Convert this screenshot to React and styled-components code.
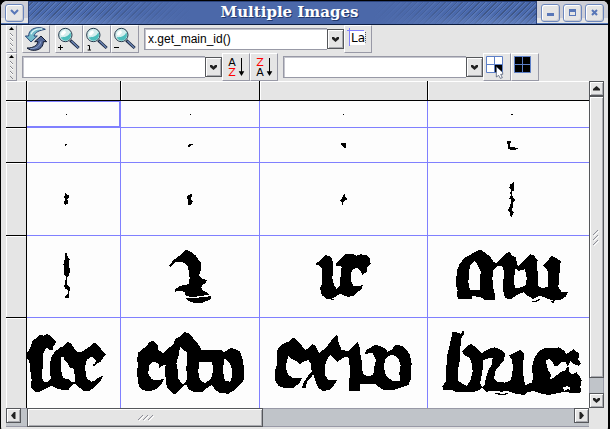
import React from "react";
import styled, { createGlobalStyle } from "styled-components";

const face = "#e5e5e5";
const shade = "#9899a6";
const blue = "#8080ff";
const dark = "#55575b";

const GlobalStyle = createGlobalStyle`
  *, *::before, *::after { box-sizing: border-box; }
  html { background: #000; }
  body { margin: 0; font-family: "Liberation Sans", Arial, sans-serif; font-size: 12px; }
  button, input { font: inherit; color: #000; padding: 0; margin: 0; border-radius: 0; }
  svg { display: block; flex: none; }
`;

const Window = styled.main`
  display: flex;
  flex-direction: column;
  min-height: 100vh;
  background: ${face};
  border: 1px solid #000;
  border-right-width: 2px;
  border-radius: 7px 7px 5px 5px;
  overflow: hidden;
`;

const TitleBar = styled.header`
  display: flex;
  height: 24px;
  border-bottom: 1px solid #0b1c40;
`;

const Controls = styled.div`
  display: flex;
  align-items: center;
  gap: 3px;
  padding: 0 4px;
  background: linear-gradient(#cdced6 0 17px, #e5e5e5 17px 22px, #5779b8 22px);
`;

const WindowButton = styled.button`
  display: grid;
  place-items: center;
  width: 19px;
  height: 18px;
  border: 1px solid #6c87bd;
  border-radius: 3px;
  background: ${face};
  box-shadow: inset 1px 1px #fff, inset -1px -1px #c9cad2;
`;

const Title = styled.h1`
  flex: 1;
  margin: 0;
  padding-left: 14px;
  border: solid #2b437c;
  border-width: 1px 1px 0 1px;
  text-align: center;
  font: bold 15px/21px "DejaVu Serif", serif;
  color: #fff;
  text-shadow: 1px 1px #22386c;
  background:
    linear-gradient(90deg, transparent 10%, #4b68a9 32%, #4b68a9 68%, transparent 90%),
    linear-gradient(transparent 12px, #6e8ac4aa),
    repeating-linear-gradient(135deg, #4969ad 0 2px, #3e5686 2px 3px, #5877b8 3px 4px);
`;

const Toolbar = styled.div`
  display: flex;
  align-items: center;
  height: 28px;
  padding-left: 5px;
`;

const Grip = styled.div`
  width: 11px;
  height: 28px;
  margin-right: 5px;
  border: 1px solid;
  border-color: #fff ${shade} ${shade} #fff;
`;

const Group = styled.div`
  display: flex;
  align-items: center;
  margin-right: 5px;
`;

const ToolButton = styled.button`
  width: 28px;
  height: 28px;
  border: 1px solid;
  border-color: #fff ${shade} ${shade} #fff;
  background: ${face};
  svg { margin: -1px; }
`;

const Combo = styled.div`
  display: flex;
  align-items: center;
  width: 200px;
`;

const ComboInput = styled.input`
  flex: 1;
  min-width: 0;
  height: 22px;
  padding-left: 3px;
  border: 1px solid ${shade};
  border-right: 0;
  box-shadow: inset 1px 1px #c5c6ce;
  background: #fff;
  outline: 0;
`;

const ArrowButton = styled.button`
  display: grid;
  place-items: center;
  flex: none;
  width: ${(p) => p.$w || 15}px;
  height: ${(p) => p.$h || 15}px;
  border: 1px solid ${dark};
  background: ${face};
  box-shadow: inset 1px 1px #fff, inset -1px -1px #aaabb0;
`;

const Body = styled.section`
  display: grid;
  grid-template-columns: minmax(0, 1fr) 15px;
  padding: 0 4px 4px 5px;
`;

const Sheet = styled.table`
  width: 100%;
  table-layout: fixed;
  border-collapse: separate;
  border-spacing: 0;
  background: #fdfdfd;
`;

const Column = styled.col`
  width: ${(p) => (p.$w ? `${p.$w}px` : "auto")};
`;

const Heading = styled.th`
  height: ${(p) => p.$h}px;
  padding: 0;
  background: ${face};
  border: 0 solid #000;
  border-right-width: ${(p) => (p.$open ? 0 : 1)}px;
  border-bottom-width: ${(p) => (p.$last ? 0 : 1)}px;
  box-shadow: inset 1px 1px #fff;
`;

const Cell = styled.td`
  padding: 0;
  overflow: hidden;
  border: 0 solid ${blue};
  border-right-width: ${(p) => (p.$open ? 0 : 1)}px;
  border-bottom-width: ${(p) => (p.$last ? 0 : 1)}px;
  box-shadow: ${(p) => (p.$selected ? `inset 0 1px ${blue}, inset -1px -1px ${blue}` : "none")};
`;

const ScrollBar = styled.div`
  display: flex;
  flex-direction: ${(p) => (p.$vertical ? "column" : "row")};
  background: #c0c4c9;
  border: 0 solid ${shade};
  border-width: ${(p) => (p.$vertical ? "0 1px" : "1px 0")};
  ${(p) => (p.$vertical ? "> * { margin-inline: -1px; }" : "> * { margin-block: -1px; }")}
`;

const Thumb = styled.div`
  display: grid;
  place-items: center;
  flex: ${(p) => p.$share} 1 0;
  border: 1px solid ${dark};
  background: ${face};
  box-shadow: inset 1px 1px #fff, inset -1px -1px #aaabb0;
`;

const Track = styled.div`
  flex: ${(p) => p.$share} 1 0;
`;

const turns = { down: 0, left: 90, up: 180, right: 270 };

const ScrollArrow = ({ to }) => (
  <svg width="9" height="9" viewBox="0 0 9 9" aria-hidden="true">
    {to === "down" ? (
      <path d="M1 2h2l1.5 1.5L6 2h2v2L4.5 7 1 4z" fill="#222" />
    ) : (
      <path transform={`rotate(${turns[to]} 4.5 4.5)`} d="M1 2.500h7v1.500L4.500 7 1 4z" fill="#222" />
    )}
  </svg>
);

const ThumbMarks = () => (
  <svg width="17" height="17" viewBox="0 0 17 17" aria-hidden="true">
    <path d="M1 11l5-5M6 11l5-5M11 11l5-5" stroke="#8d8e98" />
    <path d="M2 12l5-5M7 12l5-5M12 12l5-5" stroke="#fff" />
  </svg>
);

const ThumbMarksVertical = () => (
  <svg width="9" height="17" viewBox="0 0 9 17" aria-hidden="true">
    <path d="M1 6l5-5M1 11l5-5M1 16l5-5" stroke="#8d8e98" />
    <path d="M2 7l5-5M2 12l5-5M2 17l5-5" stroke="#fff" />
  </svg>
);

const GripMarks = () => (
  <svg width="9" height="26" viewBox="0 0 9 26" aria-hidden="true">
    <path d="M2 4l2.500-3L7 4z" fill="#000" />
    <path d="M3 7l3 3M3 12l3 3M3 17l3 3M3 22l3 3" stroke="#85868c" />
    <path d="M3 8l3 3M3 13l3 3M3 18l3 3" stroke="#fff" />
  </svg>
);

const Icon = ({ children }) => (
  <svg width="28" height="28" viewBox="0 0 84 84" aria-hidden="true">{children}</svg>
);

const RefreshIcon = () => (
  <Icon>
    <path d="M70 13C58 6 37 6 27 16c-5 5-7 10-7 17H10l17 18 19-18H36c3-11 15-17 34-20z" fill="#75bccb" stroke="#254577" strokeWidth="3" />
    <path d="M61 12C43 10 32 16 27 28" fill="none" stroke="#e2f7f8" strokeWidth="4" />
    <path d="M15 69c12 10 32 9 42-1 5-5 7-11 7-18h10L57 33 38 50h10c-3 12-14 19-33 19z" fill="#526596" stroke="#10192e" strokeWidth="3" />
    <path d="M25 71c18 0 28-7 32-22" fill="none" stroke="#8ba4cd" strokeWidth="3" />
  </Icon>
);

const ZoomIcon = ({ sign }) => (
  <Icon>
    <path d="M46 46l25 23" stroke="#17243d" strokeWidth="9" />
    <path d="M49 48l21 20" stroke="#6f88b7" strokeWidth="4" />
    <circle cx="31" cy="30" r="20" fill="#d5eeee" stroke="#23394c" strokeWidth="3" />
    <path d="M17 36c9 2 25-1 29-15 6 15-3 26-15 26-7 0-12-5-14-11z" fill="#4dbebd" />
    <path d="M18 29c0-7 5-12 12-13l3 7-9 9z" fill="#fff" />
    {sign === "+" && <path d="M9 67.500h15M16.500 60v15" stroke="#000" strokeWidth="3" />}
    {sign === "-" && <path d="M9 67.500h15" stroke="#000" strokeWidth="3" />}
    {sign === "1" && <path d="M14 61.500h5.500v13M14 75h10" fill="none" stroke="#000" strokeWidth="3" />}
  </Icon>
);

const IconText = styled.text`
  font: ${(p) => p.$size}px "DejaVu Sans", sans-serif;
`;

const LabelIcon = () => (
  <Icon>
    <path d="M18 18h45v42H18z" fill="#fff" />
    <path d="M9 16.500h51M16.500 9v54" stroke={blue} strokeWidth="3" />
    <path d="M64.500 21v32" stroke="#555" strokeWidth="3" strokeDasharray="3 3" />
    <IconText x="21" y="51" $size={36}>La</IconText>
  </Icon>
);

const SortIcon = ({ first, last }) => (
  <Icon>
    <IconText x="19" y="40" $size={33} fill={first === "Z" ? "#f00" : "#000"}>{first}</IconText>
    <IconText x="19" y="69" $size={33} fill={last === "Z" ? "#f00" : "#000"}>{last}</IconText>
    <path d="M58.500 15v50" stroke="#000" strokeWidth="3" />
    <path d="M50 55h17l-8.500 14z" />
  </Icon>
);

const SelectIcon = ({ all }) => (
  <Icon>
    <path d="M10.500 10.500h48v48h-48z" fill={all ? "#000" : "#fff"} />
    {!all && <path d="M34 34h24v24H34z" />}
    <path d="M10.500 10.500h48v48h-48zM34.500 10v48M10 34.500h48" fill="none" stroke="#5d7fc7" strokeWidth="3" />
    {!all && <path d="M40 41l19 17v6h-6l5 10-6 2-5-9-7 5z" fill="#fff" stroke="#34415f" strokeWidth="2" />}
  </Icon>
);

const columnWidths = [93, 138, 167, 161];
const rowHeights = [26, 34, 72, 81, 90];

// Each glyph: origin of its cell in drawing units (three per pixel) and its outline.
const glyphs = [
  [
    { x: 81, y: 303, d: "M198 342h3v3h-3z" },
    { x: 363, y: 303, d: "M570 342h3v3h-3z" },
    { x: 780, y: 303, d: "M1029 342h3v3h-3z" },
    { x: 1284, y: 303, d: "M1533 342h6v3h-6z" },
  ],
  [
    { x: 81, y: -6, d: "M195 42h6v3h-3v3h-3z" },
    { x: -27, y: 24, d: "M177 72h12v3h-6v3h-3v3h-6v-6h3z" },
    { x: 390, y: 24, d: "M633 69h12l3 3v12h-6l-3-6-6-3z" },
    { x: 84, y: 24, d: "M321 63h12v3l-3 3v6l-1 3 3 4h12l3 2h7v3h-6v3h-17l-6-4v-11l-6-5z" },
  ],
  [
    { x: 81, y: 99, d: "M195 189l5 4 7 3-2 10-4 2 3 6-1 9-8 1-3-6 3-10-3-8 3-3z" },
    { x: -27, y: 129, d: "M180 222h6v6l-3 4v6l6 6-3 6-3 5h-9v-17l-3-2v-8l6-3z" },
    { x: 390, y: 129, d: "M642 222h4l-2 8 4 4 4 4-7 3-6 5v9h-3v-9l-6-3 4-6 4-7z" },
    { x: 84, y: 129, d: "M340 186l2 4-1 22-6 1v9l5 12 8 6-8 8-2 14-2 10 5 6-3 4-1 8h-5l-2-12-6-6 4-10 5-14 1-8-6-4 4-8-1-10 3-6-6-9 3-11 4-1z" },
  ],
  [
    { x: 81, y: 3, d: "M195 54h5l3 11 6 7-3 18 4 15-3 17-6 6v17l2 7 6 6-1 20-3 12H195v-7l8-5v-13l-8-5-3-7 4-6 1-22-6-10 2-15-3-12 4-16z" },
    { x: -12, y: 3, d: "M182 44L200 52 213 62 220 74 228 82V105L222 122 230 130 246 136 240 145 234 148 228 158 236 168 248 174 254 181 220 182 216 186 182 184 180 172 165 167 150 170 148 164 162 155 175 150 190 148 194 130 192 112 188 95 178 84 165 80 150 82 136 96 133 92 145 76 158 66 172 55ZM182 188L220 190 222 186 258 184V192L245 198 232 203H205L188 197Z" },
    { x: 0, y: 3, d: "M165 87L175 80 190 68 197 59 210 65 217 72 220 100 217 130 222 150 230 162 240 150 242 120 245 95 227 91 228 85 240 72 255 57 275 56 290 62 300 58 320 60 330 72 332 88 322 98 320 110 308 120 302 108 290 98 280 102 272 115 274 140 280 152 295 154 308 150 305 162 292 172 280 182 265 186 248 180 240 175 228 185 215 191H200L185 180 180 160 187 145 185 120 187 100 178 92ZM213 192h9v3h-9z" },
    { x: 9, y: 3, d: "M105 85L120 68 140 57 155 48 165 44 180 52 195 65 205 80 215 85 230 70 245 55 252 50 262 62 274 68 275 85 280 95 295 80 315 58 325 60 338 75 335 95 340 120 338 150 350 160 368 155 370 130V110L355 92 365 80 380 63 395 70 407 78 405 100 402 130 400 155 410 172 430 170 422 185 405 195 385 197 365 190 345 182 325 192 305 180 295 172 275 180 255 194 240 188 235 170V140L237 110 232 95 220 92 205 105 202 130 205 160 210 178V195H180L165 185 140 184V193H100L95 180 98 165 92 150 95 120 98 100ZM135 90L150 77 160 95 167 110 165 140 166 165H135L130 140 132 115ZM272 100L280 108 300 103 305 130 303 150 285 158 270 160 266 135ZM320 197h12l12-5v3l-10 6h-14zM378 199h8v4h-5z" },
  ],
  [
    { x: 81, y: 249, d: "M81 355L90 340 97 318 110 308 120 300 132 302 140 297 150 300 158 310 168 318 165 328 158 335V345H148L142 338 135 345 128 360V395L126 430 132 440H145L152 430 150 400 152 370 165 350 180 338 188 335 205 320 215 328 225 345 232 350H245L262 340 285 322 298 335 305 345 318 358 310 368 302 380 292 385 282 395 278 390 285 385 288 375 275 365 260 375 255 395 258 420 262 432 275 440 285 438 292 430 310 422 300 440 285 455 270 467H250L235 455 225 445 212 455 205 465H190L170 460 155 452 140 460 118 470H105L92 455 95 435 90 400 88 380 81 370ZM183 368L190 364 195 378 205 388 210 400 220 398 222 410 225 425V440L215 443 205 432 190 430 184 410Z" },
    { x: -12, y: 249, d: "M40 352L50 345 62 335 75 320 85 318 97 328 100 345 115 355 130 340 145 328 150 312 165 305 178 292 188 293 205 310 218 325 228 340V346H290L296 352 308 345 320 338 335 345 345 350 352 370 357 400 358 430 350 445 340 455 325 468 310 476 285 474 272 465 260 450 245 460 235 470H205L190 462 185 450H178L165 463 158 472 148 478 138 470 125 455 122 430 120 410 122 390 110 392 103 398 100 385 85 380 72 390 70 415 78 430 90 436 117 432 110 445 95 462 75 468 55 466 42 455 38 430 35 410 40 390 36 375ZM165 335L175 345 185 350 186 370 184 400 186 425 184 440 172 448 160 430 158 405 154 385 160 365ZM222 382L260 380 264 395 262 420 255 435 240 444 225 435 220 410ZM296 370L304 375 315 385 320 400 322 425 315 440 300 438 295 415Z" },
    { x: 0, y: 249, d: "M52 345L65 328 85 320 100 308 108 312 120 325 135 345 145 340 158 327 168 335 178 355 200 335 215 315 228 300 234 305 236 325 245 345 265 348 280 332 293 322 298 330 300 355 306 380V400L310 418 325 424 340 420 342 400 348 375 338 355H325L313 358 320 345 345 330 360 333 375 340 382 350 395 345 405 330 425 332 440 345 450 360 455 385 452 410V435L445 450 425 457 405 464H370L355 455 345 447 320 446 300 448V467H267L268 440 270 400 265 365 250 368 232 380 222 370 210 360 200 375 194 395 195 420 205 435 232 434 222 450 210 464 190 468 175 460 165 435 160 418 152 428 142 440 136 460H127L128 448 140 428 155 410 152 385 145 375 130 380 120 390 110 378 95 372 85 362 80 380 78 400 85 420 100 430H125L118 445 100 458 75 460 55 452 44 435V410L50 390ZM375 375L385 362 400 360 415 370 422 390 418 415 420 438H400L385 430 375 415 372 395Z" },
    { x: 9, y: 249, d: "M80 292L90 290 100 294 108 296 112 288H116V300L108 310 106 340 104 380 98 410V435L110 445 125 452 135 440 143 410 140 385 135 370 115 358 112 350 128 332 140 327 155 340 170 355 190 342 210 337 228 345 240 357 237 375 225 390 212 405 207 430 215 440 240 443 255 438 262 420 263 400 262 375 252 362 265 355 285 345 297 355 295 380V410L296 435 302 450 320 443 325 430 320 400 328 370 340 350 358 340 375 338 390 340 400 337 415 345 425 357 445 343 462 355 460 375 468 385 462 393 448 388 437 378 430 390 432 408 440 418 455 412 464 425 470 437 466 455 468 472 455 474 440 475 425 470 412 472 395 475 370 480 345 475 325 468 305 472 300 480 265 475 250 468 230 470 205 468 185 470 172 458 165 465 150 470H90L80 464 55 466 52 455 62 440 64 400 66 365 74 330 80 305ZM175 375L190 370 203 370 200 390 190 405 182 430 180 450 172 458 165 445 172 410ZM362 378L372 370 382 380 388 392 398 394 410 382 422 380 428 395 420 406 405 412 385 430 375 432 378 418 370 408ZM414 458L426 453 436 458 436 466 428 462 418 468ZM205 474h15l8 2h10l12-2v3l-16 3h-12z" },
  ],
];

const GlyphImage = ({ glyph, width, height }) => (
  <svg
    width={width}
    height={height}
    viewBox={`${glyph.x} ${glyph.y} ${width * 3} ${height * 3}`}
    shapeRendering="crispEdges"
    aria-hidden="true"
  >
    <path d={glyph.d} fillRule="evenodd" />
  </svg>
);

const ComboBox = ({ label, value = "" }) => (
  <Combo>
    <ComboInput type="text" aria-label={label} defaultValue={value} />
    <ArrowButton $w={17} $h={20} aria-label={`${label} choices`}>
      <ScrollArrow to="down" />
    </ArrowButton>
  </Combo>
);

const ImageSheet = () => (
  <Sheet>
    <colgroup>
      <Column $w={21} />
      <Column $w={94} />
      <Column $w={139} />
      <Column $w={168} />
      <Column />
    </colgroup>
    <thead>
      <tr>
        <Heading $h={20} />
        {columnWidths.map((w, i) => (
          <Heading key={w} scope="col" $h={20} $open={i === 3} />
        ))}
      </tr>
    </thead>
    <tbody>
      {glyphs.map((row, r) => (
        <tr key={r}>
          <Heading scope="row" $last={r === 4} />
          {row.map((glyph, c) => (
            <Cell key={c} $open={c === 3} $last={r === 4} $selected={r === 0 && c === 0}>
              <GlyphImage glyph={glyph} width={columnWidths[c]} height={rowHeights[r]} />
            </Cell>
          ))}
        </tr>
      ))}
    </tbody>
  </Sheet>
);

export default function App() {
  return (
    <Window>
      <GlobalStyle />
      <TitleBar>
        <Controls>
          <WindowButton aria-label="Window menu">
            <svg width="9" height="7" viewBox="0 0 9 7"><path d="M1 1l3.500 3.500L8 1" fill="none" stroke="#5877b8" strokeWidth="2" /></svg>
          </WindowButton>
        </Controls>
        <Title>Multiple Images</Title>
        <Controls>
          <WindowButton aria-label="Minimize">
            <svg width="7" height="7" viewBox="0 0 7 7"><path d="M0 4h7v3H0z" fill="#5877b8" /></svg>
          </WindowButton>
          <WindowButton aria-label="Maximize">
            <svg width="7" height="7" viewBox="0 0 7 7"><path d="M0 0h7v7H0zM1 3v3h5V3z" fill="#5877b8" fillRule="evenodd" /></svg>
          </WindowButton>
          <WindowButton aria-label="Close">
            <svg width="7" height="7" viewBox="0 0 7 7"><path d="M1 1l5 5M6 1L1 6" stroke="#5877b8" strokeWidth="2" /></svg>
          </WindowButton>
        </Controls>
      </TitleBar>
      <Toolbar>
        <Grip><GripMarks /></Grip>
        <Group>
          <ToolButton aria-label="Refresh"><RefreshIcon /></ToolButton>
        </Group>
        <Group>
          <ToolButton aria-label="Zoom in"><ZoomIcon sign="+" /></ToolButton>
          <ToolButton aria-label="Actual size"><ZoomIcon sign="1" /></ToolButton>
          <ToolButton aria-label="Zoom out"><ZoomIcon sign="-" /></ToolButton>
        </Group>
        <Group>
          <ComboBox label="Display expression" value="x.get_main_id()" />
          <ToolButton aria-label="Show labels"><LabelIcon /></ToolButton>
        </Group>
      </Toolbar>
      <Toolbar>
        <Grip><GripMarks /></Grip>
        <Group>
          <ComboBox label="Sort expression" />
          <ToolButton aria-label="Sort ascending"><SortIcon first="A" last="Z" /></ToolButton>
          <ToolButton aria-label="Sort descending"><SortIcon first="Z" last="A" /></ToolButton>
        </Group>
        <Group>
          <ComboBox label="Select expression" />
          <ToolButton aria-label="Select matching"><SelectIcon /></ToolButton>
          <ToolButton aria-label="Select all"><SelectIcon all /></ToolButton>
        </Group>
      </Toolbar>
      <Body>
        <ImageSheet />
        <ScrollBar $vertical>
          <ArrowButton aria-label="Scroll up"><ScrollArrow to="up" /></ArrowButton>
          <Thumb $share={282}><ThumbMarksVertical /></Thumb>
          <Track $share={15} />
          <ArrowButton aria-label="Scroll down"><ScrollArrow to="down" /></ArrowButton>
        </ScrollBar>
        <ScrollBar>
          <ArrowButton aria-label="Scroll left"><ScrollArrow to="left" /></ArrowButton>
          <Track $share={6} />
          <Thumb $share={235}><ThumbMarks /></Thumb>
          <Track $share={312} />
          <ArrowButton aria-label="Scroll right"><ScrollArrow to="right" /></ArrowButton>
        </ScrollBar>
      </Body>
    </Window>
  );
}
